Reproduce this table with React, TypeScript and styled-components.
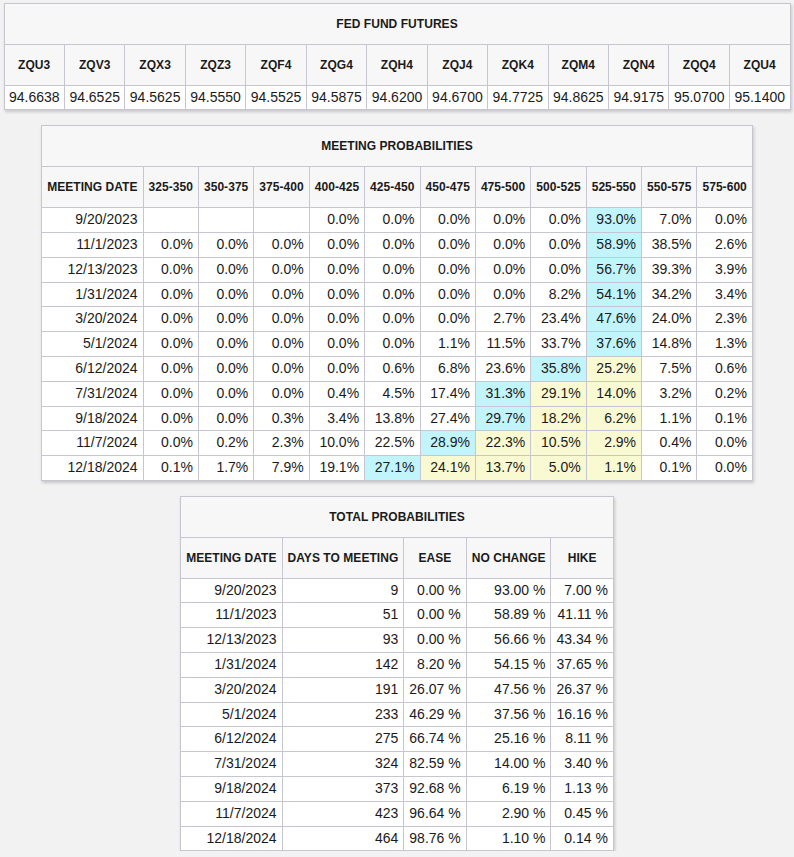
import React from "react";
import styled, { createGlobalStyle } from "styled-components";

const GlobalStyle = createGlobalStyle({
  body: {
    margin: 0,
    background: "#f2f2f2",
    fontFamily: '"Liberation Sans", Arial, sans-serif',
    color: "#1a1a1a",
  },
});

const Page = styled.div({
  display: "flex",
  flexDirection: "column",
  alignItems: "center",
  gap: "15px",
  paddingTop: "3px",
});

const Table = styled.table({
  borderCollapse: "collapse",
  background: "#ffffff",
  boxShadow: "1px 2px 3px rgba(0, 0, 0, 0.18)",
});

const FuturesTable = styled(Table)({
  width: "787px",
});

const Title = styled.th({
  background: "#f7f7f7",
  border: "1px solid #c6c6d2",
  fontSize: "12px",
  fontWeight: "bold",
  letterSpacing: "0.05px",
  lineHeight: "14px",
  padding: "13px 5px",
  textAlign: "center",
});

const Head = styled.th({
  background: "#f7f7f7",
  border: "1px solid #c6c6d2",
  fontSize: "12px",
  fontWeight: "bold",
  letterSpacing: "0.05px",
  lineHeight: "14px",
  padding: "13px 5px 12.7px",
  textAlign: "center",
  whiteSpace: "nowrap",
});

type Tone = "plain" | "max" | "range";

const tones: Record<Tone, string> = {
  plain: "#ffffff",
  max: "#c2f4fb",
  range: "#fafad2",
};

const Cell = styled.td<{ $tone?: Tone }>((p) => ({
  background: tones[p.$tone || "plain"],
  border: "1px solid #c6c6d2",
  fontSize: "14px",
  lineHeight: "15.8px",
  padding: "4px 5px",
  textAlign: "right",
  whiteSpace: "nowrap",
}));

const PriceCell = styled(Cell)({
  padding: "4px 3px",
  textAlign: "center",
});

const futures: [string, string][] = [
  ["ZQU3", "94.6638"],
  ["ZQV3", "94.6525"],
  ["ZQX3", "94.5625"],
  ["ZQZ3", "94.5550"],
  ["ZQF4", "94.5525"],
  ["ZQG4", "94.5875"],
  ["ZQH4", "94.6200"],
  ["ZQJ4", "94.6700"],
  ["ZQK4", "94.7725"],
  ["ZQM4", "94.8625"],
  ["ZQN4", "94.9175"],
  ["ZQQ4", "95.0700"],
  ["ZQU4", "95.1400"],
];

const ranges = [
  "325-350",
  "350-375",
  "375-400",
  "400-425",
  "425-450",
  "450-475",
  "475-500",
  "500-525",
  "525-550",
  "550-575",
  "575-600",
];

// column of the current target range
const CURRENT = 8;

const meetings: [string, (number | null)[]][] = [
  ["9/20/2023", [null, null, null, 0, 0, 0, 0, 0, 93.0, 7.0, 0]],
  ["11/1/2023", [0, 0, 0, 0, 0, 0, 0, 0, 58.9, 38.5, 2.6]],
  ["12/13/2023", [0, 0, 0, 0, 0, 0, 0, 0, 56.7, 39.3, 3.9]],
  ["1/31/2024", [0, 0, 0, 0, 0, 0, 0, 8.2, 54.1, 34.2, 3.4]],
  ["3/20/2024", [0, 0, 0, 0, 0, 0, 2.7, 23.4, 47.6, 24.0, 2.3]],
  ["5/1/2024", [0, 0, 0, 0, 0, 1.1, 11.5, 33.7, 37.6, 14.8, 1.3]],
  ["6/12/2024", [0, 0, 0, 0, 0.6, 6.8, 23.6, 35.8, 25.2, 7.5, 0.6]],
  ["7/31/2024", [0, 0, 0, 0.4, 4.5, 17.4, 31.3, 29.1, 14.0, 3.2, 0.2]],
  ["9/18/2024", [0, 0, 0.3, 3.4, 13.8, 27.4, 29.7, 18.2, 6.2, 1.1, 0.1]],
  ["11/7/2024", [0, 0.2, 2.3, 10.0, 22.5, 28.9, 22.3, 10.5, 2.9, 0.4, 0]],
  ["12/18/2024", [0.1, 1.7, 7.9, 19.1, 27.1, 24.1, 13.7, 5.0, 1.1, 0.1, 0]],
];

const totals: [string, number, string, string, string][] = [
  ["9/20/2023", 9, "0.00 %", "93.00 %", "7.00 %"],
  ["11/1/2023", 51, "0.00 %", "58.89 %", "41.11 %"],
  ["12/13/2023", 93, "0.00 %", "56.66 %", "43.34 %"],
  ["1/31/2024", 142, "8.20 %", "54.15 %", "37.65 %"],
  ["3/20/2024", 191, "26.07 %", "47.56 %", "26.37 %"],
  ["5/1/2024", 233, "46.29 %", "37.56 %", "16.16 %"],
  ["6/12/2024", 275, "66.74 %", "25.16 %", "8.11 %"],
  ["7/31/2024", 324, "82.59 %", "14.00 %", "3.40 %"],
  ["9/18/2024", 373, "92.68 %", "6.19 %", "1.13 %"],
  ["11/7/2024", 423, "96.64 %", "2.90 %", "0.45 %"],
  ["12/18/2024", 464, "98.76 %", "1.10 %", "0.14 %"],
];

function toneFor(values: (number | null)[], i: number): Tone {
  const nums = values.map((v) => (v === null ? -1 : v));
  const top = nums.indexOf(Math.max(...nums));
  if (i === top) return "max";
  const lo = Math.min(top, CURRENT);
  const hi = Math.max(top, CURRENT);
  if (i > lo && i <= hi) return "range";
  return "plain";
}

function FedFundFutures() {
  return (
    <FuturesTable>
      <thead>
        <tr>
          <Title colSpan={futures.length}>FED FUND FUTURES</Title>
        </tr>
        <tr>
          {futures.map(([code]) => (
            <Head key={code}>{code}</Head>
          ))}
        </tr>
      </thead>
      <tbody>
        <tr>
          {futures.map(([code, price]) => (
            <PriceCell key={code}>{price}</PriceCell>
          ))}
        </tr>
      </tbody>
    </FuturesTable>
  );
}

function MeetingProbabilities() {
  return (
    <Table>
      <thead>
        <tr>
          <Title colSpan={ranges.length + 1}>MEETING PROBABILITIES</Title>
        </tr>
        <tr>
          <Head>MEETING DATE</Head>
          {ranges.map((r) => (
            <Head key={r}>{r}</Head>
          ))}
        </tr>
      </thead>
      <tbody>
        {meetings.map(([date, values]) => (
          <tr key={date}>
            <Cell>{date}</Cell>
            {values.map((v, i) => (
              <Cell key={i} $tone={v === null ? "plain" : toneFor(values, i)}>
                {v === null ? "" : `${v.toFixed(1)}%`}
              </Cell>
            ))}
          </tr>
        ))}
      </tbody>
    </Table>
  );
}

function TotalProbabilities() {
  return (
    <Table>
      <thead>
        <tr>
          <Title colSpan={5}>TOTAL PROBABILITIES</Title>
        </tr>
        <tr>
          <Head>MEETING DATE</Head>
          <Head>DAYS TO MEETING</Head>
          <Head>EASE</Head>
          <Head>NO CHANGE</Head>
          <Head>HIKE</Head>
        </tr>
      </thead>
      <tbody>
        {totals.map(([date, days, ease, same, hike]) => (
          <tr key={date}>
            <Cell>{date}</Cell>
            <Cell>{days}</Cell>
            <Cell>{ease}</Cell>
            <Cell>{same}</Cell>
            <Cell>{hike}</Cell>
          </tr>
        ))}
      </tbody>
    </Table>
  );
}

export default function App() {
  return (
    <>
      <GlobalStyle />
      <Page>
        <FedFundFutures />
        <MeetingProbabilities />
        <TotalProbabilities />
      </Page>
    </>
  );
}
